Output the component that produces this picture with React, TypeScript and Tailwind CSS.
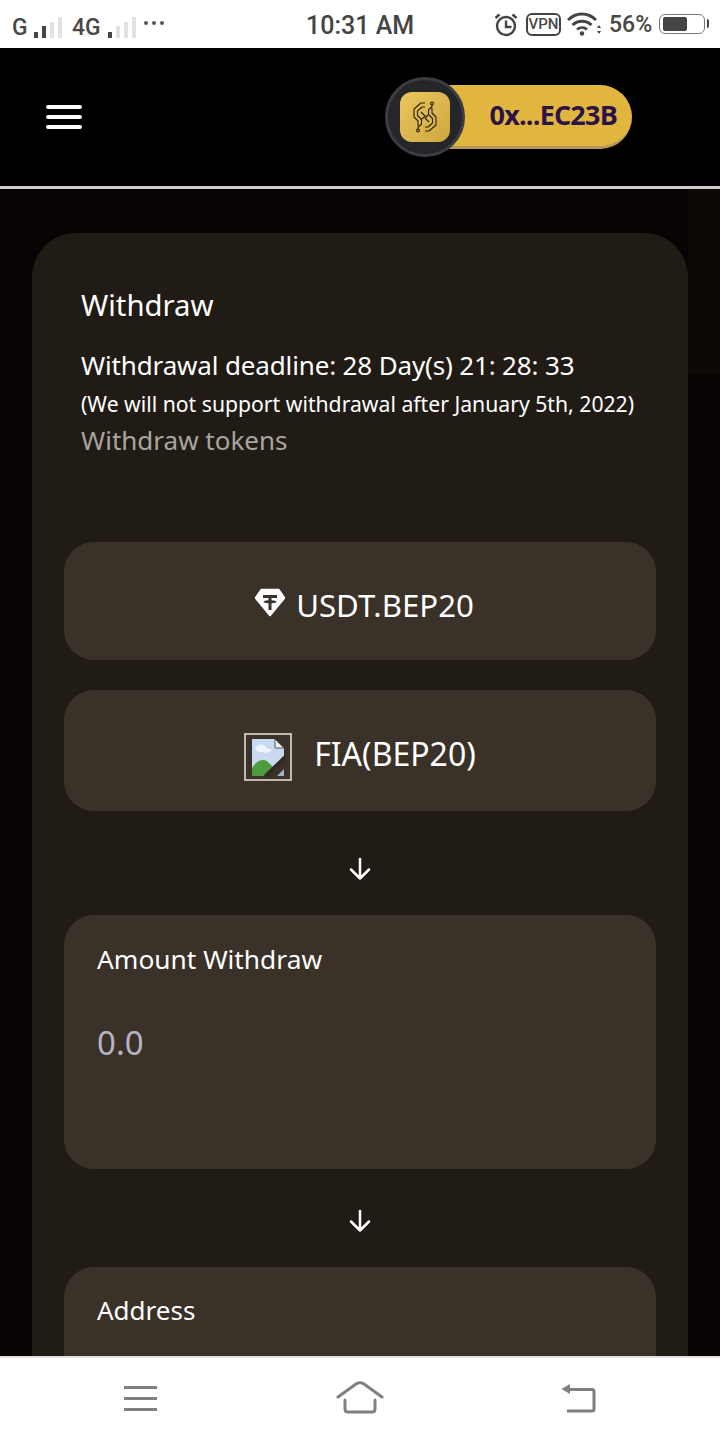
import React from 'react';

const Signal = ({ active }: { active: number }) => (
  <div className="flex items-end gap-[4px] h-[22px]">
    {[6, 12, 16, 21].map((h, i) => (
      <div key={h} style={{ height: h }} className={`w-[4px] ${i < active ? 'bg-[#444]' : 'bg-[#e2e2e2]'}`} />
    ))}
  </div>
);

const StatusBar = () => (
  <div className="h-[48px] bg-white flex items-center pl-[12px] pr-[15px] text-[#484848] shrink-0 relative font-['Roboto',sans-serif]">
    <div className="flex items-center pt-[5px]">
      <span className="text-[24px] font-medium leading-none scale-x-95 origin-left w-[22px]">G</span>
      <Signal active={2} />
      <span className="text-[24px] font-medium leading-none ml-[10px] origin-left w-[36px] scale-x-95">4G</span>
      <Signal active={1} />
      <span className="ml-[8px] flex gap-[4px] mb-[8px]">
        <i className="w-[4px] h-[4px] rounded-full bg-[#555]" />
        <i className="w-[4px] h-[4px] rounded-full bg-[#555]" />
        <i className="w-[4px] h-[4px] rounded-full bg-[#555]" />
      </span>
    </div>
    <span className="absolute left-[306px] top-[11px] text-[25px] font-medium leading-[30px] text-[#444]">10:31 AM</span>
    <div className="ml-auto flex items-center">
      <svg width="24" height="25" viewBox="0 0 24 25" fill="none" stroke="#444" strokeWidth="2.4">
        <circle cx="12" cy="14" r="9" />
        <path d="M12 8.500V15h5.500M1.500 6l4-3.500M22.500 6l-4-3.500" />
      </svg>
      <span className="ml-[8px] w-[35px] h-[23px] border-2 border-[#444] rounded-[6px] text-[15px] leading-[19px] text-center font-medium">VPN</span>
      <svg className="ml-[6px]" width="35" height="24" viewBox="0 0 35 24" fill="none" stroke="#444" strokeWidth="2.8">
        <path d="M1 8c8-8 20-8 28 0M5.500 13c5.500-5 13.500-5 19 0M10 17.500c3-2.500 7-2.500 10 0" />
        <circle cx="15" cy="21.500" r="2.200" fill="#444" stroke="none" />
        <path d="M32 13l2 3h-4zM32 22l2-3h-4z" fill="#444" stroke="none" />
      </svg>
      <span className="ml-[7px] w-[41px] text-[23px] font-medium leading-none pt-[1px] whitespace-nowrap">56%</span>
      <div className="ml-[9px] w-[46px] h-[20px] border-[1.500px] border-[#777] rounded-[6px] py-[2px] pl-[3px] relative">
        <div className="w-[24px] h-full bg-[#444] rounded-[2px]" />
        <i className="absolute -right-[5px] top-[4px] w-[2px] h-[9px] bg-[#444] rounded-r-full" />
      </div>
    </div>
  </div>
);

const Logo = () => {
  const half = 'M2 9l7-6h4M2 9v8l4 4v5M5.500 11L10 7h3M5.500 11v4.500l4 4V24L6 27.500V29M9 12l4 4-3 3';
  return (
    <svg width="26" height="34" viewBox="0 0 26 34" fill="none" stroke="#2a1f10" strokeWidth="1.100" strokeLinejoin="round">
      <path d={half} />
      <circle cx="6" cy="30.500" r="1.400" />
      <g transform="rotate(180 13 17)">
        <path d={half} />
        <circle cx="6" cy="30.500" r="1.400" />
      </g>
    </svg>
  );
};

const Header = () => (
  <div className="h-[138px] bg-black flex items-center pl-[46px] shrink-0">
    <div className="flex flex-col gap-[6px]">
      <i className="block w-[36px] h-[4px] rounded-full bg-white" />
      <i className="block w-[36px] h-[4px] rounded-full bg-white" />
      <i className="block w-[36px] h-[4px] rounded-full bg-white" />
    </div>
    <div className="ml-[303px] relative w-[248px] h-[80px] flex items-center">
      <div className="absolute left-[40px] right-[1px] top-[8px] h-[64px] rounded-r-full bg-[#e0b63f] border-b-[3px] border-[#b8975a] flex items-center justify-end pr-[15px]">
        <span className="font-['Open_Sans',sans-serif] text-[27px] font-bold tracking-[-0.8px] text-[#2c1246]">0x...EC23B</span>
      </div>
      <div className="relative w-[80px] h-[80px] rounded-full bg-[#25262a] border-[3px] border-[#3b3d42] flex items-center justify-center">
        <div className="w-[50px] h-[50px] rounded-[12px] bg-gradient-to-br from-[#eac75e] to-[#cfa63e] flex items-center justify-center">
          <Logo />
        </div>
      </div>
    </div>
  </div>
);

const TetherIcon = () => (
  <svg width="32" height="30" viewBox="0 0 32 30">
    <path d="M7.500 2h17l5.500 8-14 17L2 10z" fill="#fff" stroke="#fff" strokeWidth="2.500" strokeLinejoin="round" />
    <path d="M9 7h14v3h-5.500v2.200c3 .2 5 .8 5 1.500s-2 1.300-5 1.500V22h-3v-6.800c-3-.2-5-.8-5-1.500s2-1.300 5-1.500V10H9z" fill="#3a3128" />
  </svg>
);

const BrokenImage = () => (
  <div className="w-[48px] h-[48px] border-2 border-[#bdb8b0] flex items-center justify-center">
    <svg width="34" height="40" viewBox="0 0 34 40">
      <path d="M1 2h23l9 9v11L16 39H1z" fill="#c9d9f0" />
      <path d="M4 11c4-5 9-4 11-1s7 1 5 4-16 2-16-3z" fill="#eef4fb" />
      <path d="M1 39V31c5-8 11-10 16-6l5 5-7 9z" fill="#4f9c3f" />
      <path d="M24 2l9 9h-9z" fill="#efefef" stroke="#555" strokeWidth="1" />
      <path d="M14 39.500L34 20" stroke="#2f2a25" strokeWidth="3.500" fill="none" />
      <path d="M26 39l7-7v7z" fill="#9fb0c5" />
    </svg>
  </div>
);

const Arrow = ({ className = '' }: { className?: string }) => (
  <div className={`h-[98px] flex items-center justify-center ${className}`}>
    <svg className="mt-[6px]" width="24" height="24" viewBox="0 0 24 24" fill="none" stroke="#fff" strokeWidth="2.500" strokeLinecap="round" strokeLinejoin="round">
      <path d="M12 2v19M3 12.500l9 9 9-9" />
    </svg>
  </div>
);

const NavBar = () => (
  <div className="h-[84px] bg-white border-t-2 border-[#e5e2dc] flex items-center shrink-0 relative">
    <div className="absolute left-[124px] top-[28px] flex flex-col gap-[8px]">
      <i className="block w-[33px] h-[3px] bg-[#808080]" />
      <i className="block w-[33px] h-[3px] bg-[#808080]" />
      <i className="block w-[33px] h-[3px] bg-[#808080]" />
    </div>
    <svg className="absolute left-[336px] top-[22px]" width="48" height="36" viewBox="0 0 48 36" fill="none" stroke="#808080" strokeWidth="3" strokeLinecap="round" strokeLinejoin="round">
      <path d="M2 17L20 4c2.500-1.500 5.500-1.500 8 0l18 13" />
      <path d="M9 20v9c0 2 1.500 3 3 3h24c1.500 0 3-1 3-3v-9" />
    </svg>
    <svg className="absolute left-[560px] top-[22px]" width="38" height="36" viewBox="0 0 38 36" fill="none" stroke="#808080" strokeWidth="3" strokeLinejoin="round">
      <path d="M8 9.500h24c1.500 0 2 .5 2 2v17.500c0 1.500-.5 2-2 2H7" />
      <path d="M1.500 9L10 4v10z" fill="#808080" stroke="none" />
    </svg>
  </div>
);

export default function App() {
  return (
    <div className="w-[720px] h-[1440px] flex flex-col overflow-hidden font-['Noto_Sans',sans-serif]">
      <StatusBar />
      <Header />
      <div className="h-[3px] bg-[#cfcbd0] shrink-0" />
      <main className="relative flex-1 min-h-0 overflow-hidden bg-[#070403] px-[32px] pt-[44px]">
        {/* faint backdrop picture on the right edge */}
        <div className="absolute right-0 top-0 w-[32px] h-[185px] bg-[#0e0905]" />
        <div className="relative bg-[#211b15] rounded-t-[44px] px-[32px] pt-[53px] h-[1200px]">
          <div className="px-[17px] text-white">
            <h1 className="text-[29.3px] leading-[38px]">Withdraw</h1>
            <p className="mt-[23px] text-[26px] leading-[36px] tracking-[-0.15px]">Withdrawal deadline: 28 Day(s) 21: 28: 33</p>
            <p className="text-[21.2px] leading-[30px] mt-[6px] whitespace-nowrap">(We will not support withdrawal after January 5th, 2022)</p>
            <p className="text-[26px] leading-[36px] text-[#a9a59f] mt-[3px]">Withdraw tokens</p>
          </div>
          <button className="mt-[84px] w-full h-[118px] pt-[8px] pl-[8px] rounded-[30px] bg-[#3a3128] flex items-center justify-center gap-[10px] text-white text-[31.2px]">
            <span className="mb-[4px]"><TetherIcon /></span>
            <span>USDT.BEP20</span>
          </button>
          <button className="mt-[30px] w-full h-[121px] pt-[6px] rounded-[30px] bg-[#3a3128] flex items-center justify-center gap-[22px] text-white text-[32px]">
            <span className="mt-[6px]"><BrokenImage /></span>
            <span>FIA(BEP20)</span>
          </button>
          <Arrow className="mt-[6px]" />
          <div className="h-[254px] rounded-[30px] bg-[#3a3128] px-[33px] pt-[25px]">
            <div className="text-white text-[26.3px] leading-[38px]">Amount Withdraw</div>
            <div className="text-[#b4b4c2] text-[33px] leading-[40px] mt-[45px]">0.0</div>
          </div>
          <Arrow />
          <div className="h-[254px] rounded-[30px] bg-[#3a3128] px-[33px] pt-[24px]">
            <div className="text-white text-[26px] leading-[38px]">Address</div>
          </div>
        </div>
      </main>
      <NavBar />
    </div>
  );
}
